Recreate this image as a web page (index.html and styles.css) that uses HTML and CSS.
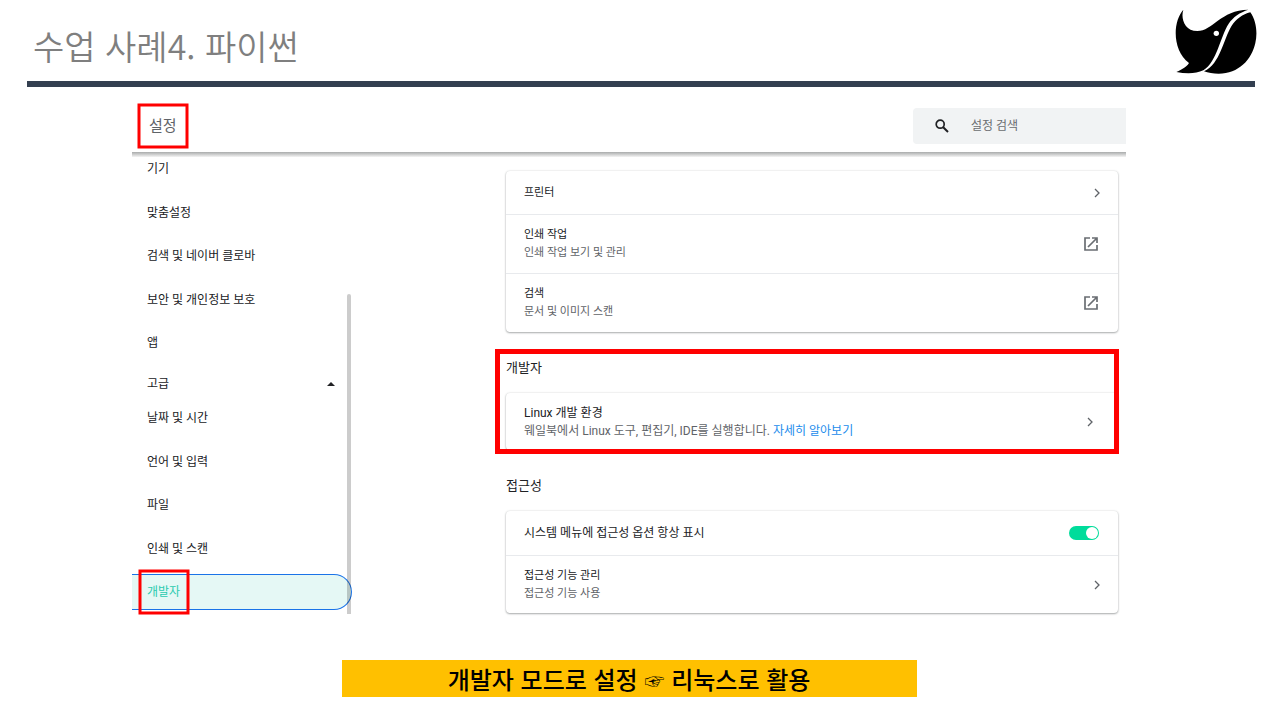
FILE: index.html
```html
<!DOCTYPE html>
<html lang="ko">
<head>
  <meta charset="UTF-8">
  <title>수업 사례4. 파이썬</title>
  <link rel="stylesheet" href="styles.css">
</head>
<body>
  <header class="slide-header">
    <h1>수업 사례4. 파이썬</h1>
    <svg class="logo" viewBox="105 28 246 198" aria-hidden="true">
      <path d="M130 30C122 54 132 94 172 94C218 94 242 31 325 30C300 38 279 52 266 72C240 112 232 185 190 212C168 223 138 223 109 217C124 210 138 204 147 190C96 152 98 66 130 30Z"/>
      <path d="M331 38C349 64 353 100 346 130C335 180 296 222 236 222C220 222 204 220 192 215C242 191 249 120 275 78C288 58 308 44 331 38Z"/>
      <circle cx="229" cy="101" r="8" fill="#fff"/>
    </svg>
  </header>
  <hr class="rule">

  <main class="slide-body">
    <div class="settings">
      <div class="toolbar">
        <h2 class="marked">설정</h2>
        <label class="search">
          <svg viewBox="0 0 14 14" width="14" height="14" aria-hidden="true"><circle cx="5.2" cy="5.2" r="4" fill="none" stroke="#202124" stroke-width="1.7"/><path d="M8.2 8.2L13 13" stroke="#202124" stroke-width="2"/></svg>
          <input type="text" placeholder="설정 검색" aria-label="설정 검색">
        </label>
      </div>

      <div class="columns">
        <nav class="menu">
          <div class="menu-group">
            <a href="#">기기</a>
            <a href="#">맞춤설정</a>
            <a href="#">검색 및 네이버 클로바</a>
            <a href="#">보안 및 개인정보 보호</a>
            <a href="#">앱</a>
          </div>
          <button class="advanced" type="button">고급
            <svg viewBox="0 0 8 4" width="8" height="4" aria-hidden="true"><path d="M0 4L4 0L8 4Z" fill="#202124"/></svg>
          </button>
          <div class="menu-group">
            <a href="#">날짜 및 시간</a>
            <a href="#">언어 및 입력</a>
            <a href="#">파일</a>
            <a href="#">인쇄 및 스캔</a>
            <a href="#" class="selected"><span class="marked">개발자</span></a>
          </div>
          <div class="scrollbar"></div>
        </nav>

        <div class="content">
          <section class="card">
            <a href="#" class="row">
              <span>프린터</span>
              <svg class="chevron" viewBox="0 0 6 10" aria-hidden="true"><path d="M1 1L5 5L1 9"/></svg>
            </a>
            <a href="#" class="row tall">
              <span>인쇄 작업<small>인쇄 작업 보기 및 관리</small></span>
              <svg class="launch" viewBox="0 0 15 14" aria-hidden="true"><path d="M6 1H1V13H13V8M8 1H13V6M13 1L4 10"/></svg>
            </a>
            <a href="#" class="row tall">
              <span>검색<small>문서 및 이미지 스캔</small></span>
              <svg class="launch" viewBox="0 0 15 14" aria-hidden="true"><path d="M6 1H1V13H13V8M8 1H13V6M13 1L4 10"/></svg>
            </a>
          </section>

          <section class="highlight">
            <h3>개발자</h3>
            <div class="card">
              <div class="row wide tall">
                <span>Linux 개발 환경<small>웨일북에서 Linux 도구, 편집기, IDE를 실행합니다. <a href="#">자세히 알아보기</a></small></span>
                <svg class="chevron" viewBox="0 0 6 10" aria-hidden="true"><path d="M1 1L5 5L1 9"/></svg>
              </div>
            </div>
          </section>

          <section>
            <h3>접근성</h3>
            <div class="card">
              <label class="row wide">
                <span>시스템 메뉴에 접근성 옵션 항상 표시</span>
                <input class="toggle" type="checkbox" checked>
              </label>
              <a href="#" class="row tall">
                <span>접근성 기능 관리<small>접근성 기능 사용</small></span>
                <svg class="chevron" viewBox="0 0 6 10" aria-hidden="true"><path d="M1 1L5 5L1 9"/></svg>
              </a>
            </div>
          </section>
        </div>
      </div>
    </div>

    <p class="caption">개발자 모드로 설정 <span class="hand">☞</span> 리눅스로 활용</p>
  </main>
</body>
</html>
```
FILE: styles.css
```css
*, *::before, *::after { box-sizing: border-box; }
body { margin: 0; background: #fff; color: #202124; font-family: "Noto Sans CJK KR", sans-serif; font-size: 12px; line-height: 18px; }
h1, h2, h3, p { margin: 0; font-weight: 400; }
a { color: inherit; text-decoration: none; }

.slide-header { display: flex; justify-content: space-between; align-items: center; padding: 9px 23px 6px 33px; }
.slide-header h1 { font-size: 34px; line-height: 48px; font-weight: 350; color: #7f7f7f; padding-top: 8px; }
.logo { width: 82px; height: 66px; }
.rule { height: 6px; margin: 0 25px 0 27px; border: 0; background: #333f50; }

.slide-body { padding: 21px 154px 0 132px; }

/* settings window */
.settings { font-family: Roboto, "Noto Sans CJK KR", sans-serif; }
.toolbar { position: relative; display: flex; justify-content: space-between; align-items: center; padding-bottom: 8px; }
.toolbar::after { content: ""; position: absolute; left: 0; right: 0; top: 100%; height: 5px; background: linear-gradient(#a9abab, #f4f4f4); }
.toolbar h2 { font-size: 15px; line-height: 20px; margin-left: 17px; color: #5f6368; }
.search { display: flex; align-items: center; gap: 22px; width: 213px; height: 36px; padding: 0 22px; border-radius: 4px 0 0 4px; background: #f1f3f4; }
.search input { flex: 1; min-width: 0; padding: 0; border: 0; outline: 0; background: none; font: inherit; }
.search input::placeholder { color: #6a6d70; opacity: 1; }
.columns { display: flex; }

.menu { position: relative; flex: 0 0 220px; margin-top: -1px; }
.menu-group { display: flex; flex-direction: column; justify-content: space-between; min-height: 210px; }
.menu-group a { display: flex; align-items: center; height: 36px; padding-left: 15px; }
.menu-group .selected { border: 1px solid #1a73e8; border-left: 0; border-radius: 0 18px 18px 0; background: #e5f8f5; color: #2bcbb0; }
.advanced { display: flex; justify-content: space-between; align-items: center; width: 100%; height: 39px; padding: 7px 17px 0 15px; border: 0; background: none; color: inherit; font: inherit; cursor: pointer; }
.scrollbar { position: absolute; top: 143px; right: 1px; bottom: -1px; width: 4px; border-radius: 2px 2px 0 0; background: rgba(0, 0, 0, 0.2); }

.content { flex: 1; padding: 19px 8px 0 154px; }
.content h3 { padding: 26px 0 15px; font-size: 13px; line-height: 20px; }
.card { border-radius: 4px; box-shadow: 0 1px 2px rgba(60, 64, 67, 0.4), 0 0 2px rgba(60, 64, 67, 0.2); }
.row { display: flex; justify-content: space-between; align-items: center; height: 43px; padding: 0 18px; font-size: 11px; }
.row + .row { border-top: 1px solid #e8eaed; }
.row.wide { height: 44px; padding-right: 19px; font-size: 12px; }
.row.tall { height: 59px; }
.row.wide + .tall { height: 58px; }
.row small { display: block; font-size: inherit; color: #5f6368; }
.row small a { color: #1a8cec; }
.chevron { width: 6px; height: 10px; fill: none; stroke: #5f6368; stroke-width: 1.3; }
.launch { width: 15px; height: 14px; margin-right: 1px; fill: none; stroke: #6a6e73; stroke-width: 1.7; }
.toggle { appearance: none; display: flex; justify-content: flex-end; width: 30px; height: 14px; margin: 0; padding: 1px; border-radius: 7px; background: #00dc9b; }
.toggle::before { content: ""; width: 12px; height: 12px; border-radius: 50%; background: #fff; }

/* red marker boxes */
.marked, .highlight { position: relative; }
.marked::after, .highlight::after { content: ""; position: absolute; border: 3px solid #f00; pointer-events: none; }
.marked::after { width: 51px; height: 45px; top: 50%; left: 50%; transform: translate(-50%, -50%); }
.highlight::after { border-width: 5px; inset: 17px -1px -4px -11px; }
.highlight .row { height: 57px; padding-right: 25px; }

.caption { max-width: 575px; margin: 47px auto 0; background: #ffc000; color: #000; text-align: center; font-size: 24px; line-height: 37px; font-weight: 500; }
.hand { font-size: 20px; line-height: 20px; }
```
